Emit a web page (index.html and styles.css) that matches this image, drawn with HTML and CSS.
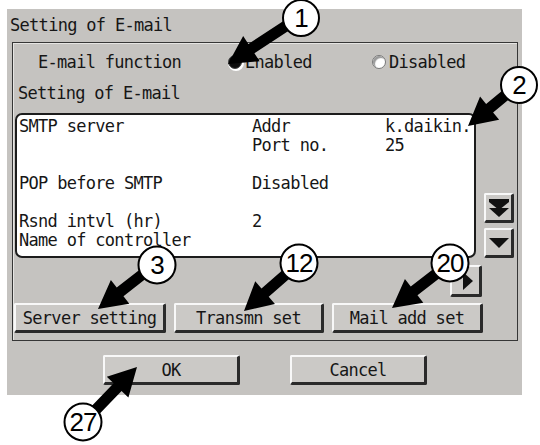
FILE: index.html
```html
<!DOCTYPE html>
<html lang="en">
<head>
    <meta charset="UTF-8">
    <meta name="viewport" content="width=device-width, initial-scale=1.0">
    <title>Setting of E-mail</title>
    <link rel="stylesheet" href="styles.css">
</head>
<body>
    <div class="panel">
        <div class="title">Setting of E-mail</div>
        <div class="frame">
            <div class="func-row">
                <span class="func-label">E-mail function</span>
                <span class="opt opt-first"><i class="radio on"></i>Enabled</span>
                <span class="opt"><i class="radio"></i>Disabled</span>
            </div>
            <div class="sub">Setting of E-mail</div>
            <div class="list-row">
                <div class="list">
                    <div class="entry spaced">
                        <span>SMTP server</span><span>Addr</span><span>k.daikin.</span>
                        <span></span><span>Port no.</span><span>25</span>
                    </div>
                    <div class="entry spaced">
                        <span>POP before SMTP</span><span>Disabled</span><span></span>
                    </div>
                    <div class="entry">
                        <span>Rsnd intvl (hr)</span><span>2</span><span></span>
                    </div>
                    <div class="entry">
                        <span class="wide">Name of controller</span>
                    </div>
                </div>
                <div class="scroll">
                    <button class="btn sbtn">
                        <svg width="20" height="20" viewBox="0 0 20 20"><rect x="0" y="1" width="20" height="3" fill="#111"/><polygon points="0,4 20,4 10,12" fill="#111"/><polygon points="0,10 20,10 10,19" fill="#111"/></svg>
                    </button>
                    <button class="btn sbtn">
                        <svg width="20" height="12" viewBox="0 0 20 12"><polygon points="0,1 20,1 10,11" fill="#111"/></svg>
                    </button>
                </div>
            </div>
            <div class="hrow">
                <button class="btn hbtn">
                    <svg width="12" height="18" viewBox="0 0 12 18"><polygon points="1,0 11,9 1,18" fill="#111"/></svg>
                </button>
            </div>
            <div class="actions">
                <button class="btn act act-server">Server setting</button>
                <button class="btn act act-trans">Transmn set</button>
                <button class="btn act act-mail">Mail add set</button>
            </div>
        </div>
        <div class="footer">
            <button class="btn foot">OK</button>
            <button class="btn foot">Cancel</button>
        </div>
    </div>

    <!-- callout arrows and numbers over the screen -->
    <svg class="callouts" width="540" height="445" viewBox="0 0 540 445">
        <g fill="#000">
            <polygon transform="translate(228,64) rotate(146.7)" points="0,0 -28,-15 -28,-5.5 -80,-5.5 -80,5.5 -28,5.5 -28,15"/>
            <polygon transform="translate(468,126) rotate(140.5)" points="0,0 -28,-15 -28,-5.5 -60,-5.5 -60,5.5 -28,5.5 -28,15"/>
            <polygon transform="translate(98,309) rotate(142.1)" points="0,0 -28,-15 -28,-5.5 -68,-5.5 -68,5.5 -28,5.5 -28,15"/>
            <polygon transform="translate(244,311) rotate(138.9)" points="0,0 -28,-15 -28,-5.5 -66,-5.5 -66,5.5 -28,5.5 -28,15"/>
            <polygon transform="translate(392,308) rotate(142.2)" points="0,0 -28,-15 -28,-5.5 -66,-5.5 -66,5.5 -28,5.5 -28,15"/>
            <polygon transform="translate(137,367) rotate(-46.1)" points="0,0 -28,-15 -28,-5.5 -70,-5.5 -70,5.5 -28,5.5 -28,15"/>
        </g>
        <g fill="#fff" stroke="#000" stroke-width="2">
            <circle cx="301" cy="18" r="18"/>
            <circle cx="519" cy="85" r="18"/>
            <circle cx="157" cy="265" r="18.5"/>
            <circle cx="299" cy="263" r="18.5"/>
            <circle cx="450" cy="263" r="18.5"/>
            <circle cx="83" cy="422" r="18.5"/>
        </g>
        <g class="num">
            <text x="301" y="27">1</text>
            <text x="519" y="94">2</text>
            <text x="157" y="274">3</text>
            <text x="299" y="272">12</text>
            <text x="450" y="272">20</text>
            <text x="83" y="431">27</text>
        </g>
    </svg>
</body>
</html>
```

FILE: styles.css
```css
body {
    margin: 0;
    width: 540px;
    height: 445px;
    position: relative;
    overflow: hidden;
    background: #fff;
    font-family: "DejaVu Sans Mono", monospace;
    font-size: 17px;
    letter-spacing: -0.7px;
    color: #161616;
}
.panel {
    margin: 9px 0 0 7px;
    width: 515px;
    height: 386px;
    background: #c5c3c0;
}
.title {
    height: 33px;
    line-height: 32px;
    padding-left: 3px;
}
.frame {
    margin-left: 5px;
    width: 506px;
    box-sizing: border-box;
    border: 1px solid #363636;
    box-shadow: inset 1px 1px 0 #e6e5e3;
    padding-bottom: 7px;
}
.func-row {
    height: 38px;
    display: flex;
    align-items: center;
    padding-left: 25px;
}
.func-label {
    width: 190px;
}
.opt {
    display: flex;
    align-items: center;
}
.opt-first {
    width: 144px;
}
.radio {
    width: 12px;
    height: 12px;
    border-radius: 50%;
    border: 1px solid #777;
    background: #fff;
    box-shadow: inset 2px 2px 1px #9a9a9a;
    margin-right: 3px;
}
.radio.on {
    background: #0c0c0c;
    border-color: #444;
    box-shadow: 1px 1px 0 1px #fff;
}
.sub {
    height: 32px;
    line-height: 24px;
    padding-left: 5px;
}
.list-row {
    display: flex;
    gap: 8px;
    padding-left: 2px;
}
.list {
    width: 461px;
    height: 145px;
    box-sizing: border-box;
    background: #fff;
    border: 2px solid #1c1c1c;
    border-radius: 7px;
    padding: 2px 0 0 2px;
    line-height: 19px;
    white-space: nowrap;
}
.entry {
    display: grid;
    grid-template-columns: 233px 133px 1fr;
    grid-auto-rows: 19px;
}
.entry.spaced {
    margin-bottom: 19px;
}
.wide {
    grid-column: 1 / 4;
}
.scroll {
    align-self: flex-end;
    display: flex;
    flex-direction: column;
    gap: 5px;
}
.btn {
    font: inherit;
    letter-spacing: inherit;
    color: inherit;
    background: #cbc9c6;
    border-style: solid;
    border-width: 2px 3px 3px 2px;
    border-color: #f8f8f8 #2a2a2a #2a2a2a #f8f8f8;
    border-radius: 2px;
    padding: 0;
    box-sizing: border-box;
    display: flex;
    align-items: center;
    justify-content: center;
}
.sbtn {
    width: 30px;
    height: 30px;
}
.hrow {
    display: flex;
    justify-content: flex-end;
    padding-right: 35px;
    margin-top: 7px;
}
.hbtn {
    width: 32px;
    height: 32px;
    justify-content: flex-end;
    align-items: flex-end;
    padding: 0 5px 4px 0;
}
.actions {
    display: flex;
    gap: 8px;
    margin-top: 6px;
    padding-left: 1px;
}
.act {
    height: 30px;
}
.act-server {
    width: 152px;
}
.act-trans {
    width: 150px;
}
.act-mail {
    width: 151px;
}
.footer {
    display: flex;
    gap: 50px;
    margin-top: 14px;
    padding-left: 96px;
}
.foot {
    width: 137px;
    height: 30px;
}
.callouts {
    position: absolute;
    left: 0;
    top: 0;
    pointer-events: none;
}
.num text {
    font-family: "Liberation Sans", Arial, sans-serif;
    font-size: 26px;
    letter-spacing: -1px;
    text-anchor: middle;
    fill: #000;
}
```
